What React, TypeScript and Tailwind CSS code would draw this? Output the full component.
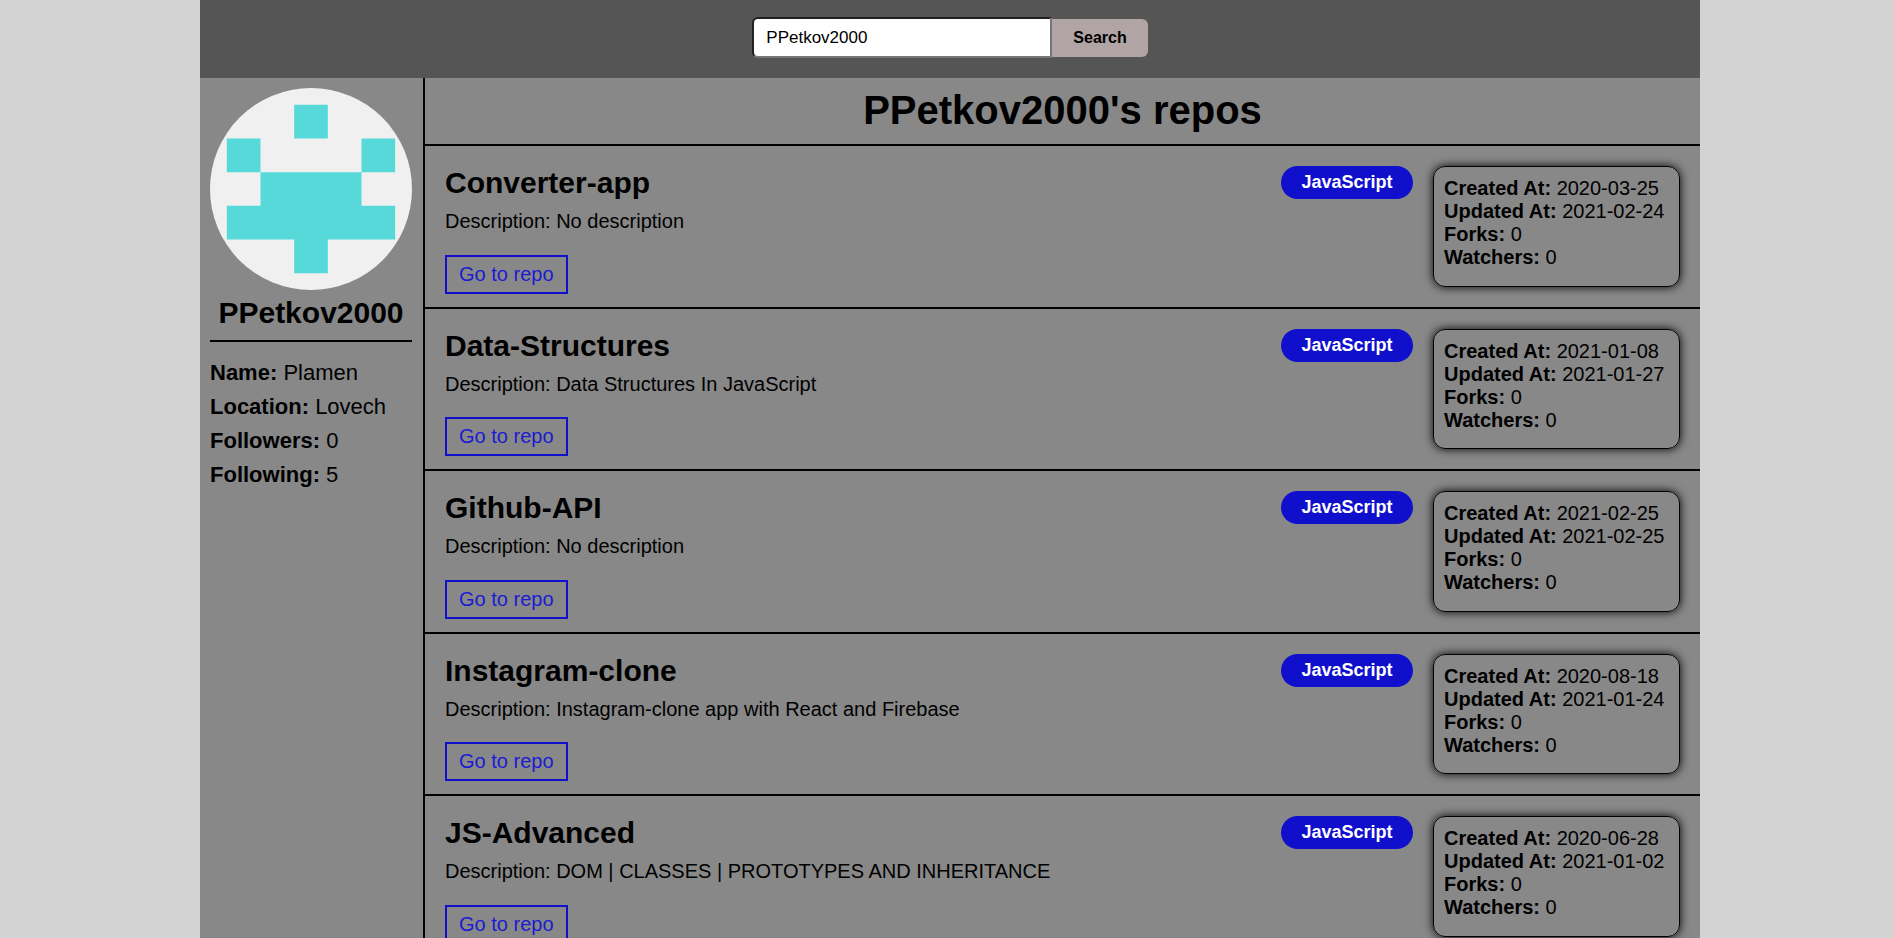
import { useState } from "react";

type Repo = {
  name: string;
  description: string;
  language: string;
  created: string;
  updated: string;
  forks: number;
  watchers: number;
};

const USER = "PPetkov2000";

const repos: Repo[] = [
  { name: "Converter-app", description: "No description", language: "JavaScript", created: "2020-03-25", updated: "2021-02-24", forks: 0, watchers: 0 },
  { name: "Data-Structures", description: "Data Structures In JavaScript", language: "JavaScript", created: "2021-01-08", updated: "2021-01-27", forks: 0, watchers: 0 },
  { name: "Github-API", description: "No description", language: "JavaScript", created: "2021-02-25", updated: "2021-02-25", forks: 0, watchers: 0 },
  { name: "Instagram-clone", description: "Instagram-clone app with React and Firebase", language: "JavaScript", created: "2020-08-18", updated: "2021-01-24", forks: 0, watchers: 0 },
  { name: "JS-Advanced", description: "DOM | CLASSES | PROTOTYPES AND INHERITANCE", language: "JavaScript", created: "2020-06-28", updated: "2021-01-02", forks: 0, watchers: 0 },
];

const profile: [string, string][] = [
  ["Name", "Plamen"],
  ["Location", "Lovech"],
  ["Followers", "0"],
  ["Following", "5"],
];

function SearchBar() {
  const [query, setQuery] = useState(USER);
  return (
    <header className="bg-[#555] pt-[17px] pb-5">
      <form className="flex items-center justify-center" onSubmit={(e) => e.preventDefault()}>
        <input
          type="text"
          aria-label="GitHub username"
          value={query}
          onChange={(e) => setQuery(e.target.value)}
          className="h-[41px] w-[300px] rounded-l-[6px] border-2 border-t-[#212121] border-r-[#767676] border-b-[#767676] border-l-[#212121] bg-white px-3 text-[17px] outline-none"
        />
        <button type="submit" className="h-[38px] rounded-r-[6px] bg-[#b1a4a4] px-[21px] text-[16px] font-bold">
          Search
        </button>
      </form>
    </header>
  );
}

function Avatar() {
  return (
    <svg viewBox="0 0 420 420" role="img" aria-label={USER} className="block w-full rounded-full bg-[#f0f0f0]">
      <path
        fill="#57d9d9"
        d="M175 35h70v70h-70zM35 105h70v70H35zM315 105h70v70h-70zM105 175h210v70h70v70H245v70h-70v-70H35v-70h70z"
      />
    </svg>
  );
}

function Sidebar() {
  return (
    <aside className="w-[225px] shrink-0 border-r-2 border-black py-[10px] pr-[11px] pl-[10px]">
      <Avatar />
      <h2 className="mb-[14px] border-b-2 border-black pt-[6px] pb-[10px] text-center text-[30px] leading-[34px] font-bold">{USER}</h2>
      <ul className="text-[22px] leading-[34px]">
        {profile.map(([label, value]) => (
          <li key={label}>
            <strong>{label}:</strong> {value}
          </li>
        ))}
      </ul>
    </aside>
  );
}

function RepoRow({ repo }: { repo: Repo }) {
  return (
    <li className="flex items-stretch gap-5 border-b-2 border-black p-5 pb-[13px]">
      <div className="min-w-0 flex-1">
        <h3 className="text-[30px] leading-[34px] font-bold">{repo.name}</h3>
        <p className="mt-2 mb-[19px] text-[20px] leading-snug">Description: {repo.description}</p>
        <a href={`https://github.com/${USER}/${repo.name}`} className="inline-block border-2 border-[#1010cc] px-3 py-[6px] align-top text-[20px] leading-[23px] text-[#1b1bd1]">
          Go to repo
        </a>
      </div>
      <span className="min-w-[132px] self-start rounded-full bg-[#1010cc] px-5 py-[6px] text-center text-[18px] leading-[21px] font-bold text-white">
        {repo.language}
      </span>
      <div className="mb-[7px] w-[247px] rounded-[12px] border border-black p-[10px] text-[20px] leading-[23px] shadow-[0_0_10px_black]">
        <p><strong>Created At:</strong> {repo.created}</p>
        <p><strong>Updated At:</strong> {repo.updated}</p>
        <p><strong>Forks:</strong> {repo.forks}</p>
        <p><strong>Watchers:</strong> {repo.watchers}</p>
      </div>
    </li>
  );
}

export default function App() {
  return (
    <div className="min-h-screen bg-[#d3d3d3] pr-[194px] pl-[200px] font-['Liberation_Sans',Arial,sans-serif] text-black">
      <div className="flex min-h-screen flex-col bg-[#888]">
        <SearchBar />
        <div className="flex flex-1">
          <Sidebar />
          <main className="min-w-0 flex-1">
            <h1 className="border-b-2 border-black pt-[9px] pb-[11px] text-center text-[40px] leading-[46px] font-bold">{USER}'s repos</h1>
            <ul>
              {repos.map((repo) => (
                <RepoRow key={repo.name} repo={repo} />
              ))}
            </ul>
          </main>
        </div>
      </div>
    </div>
  );
}
